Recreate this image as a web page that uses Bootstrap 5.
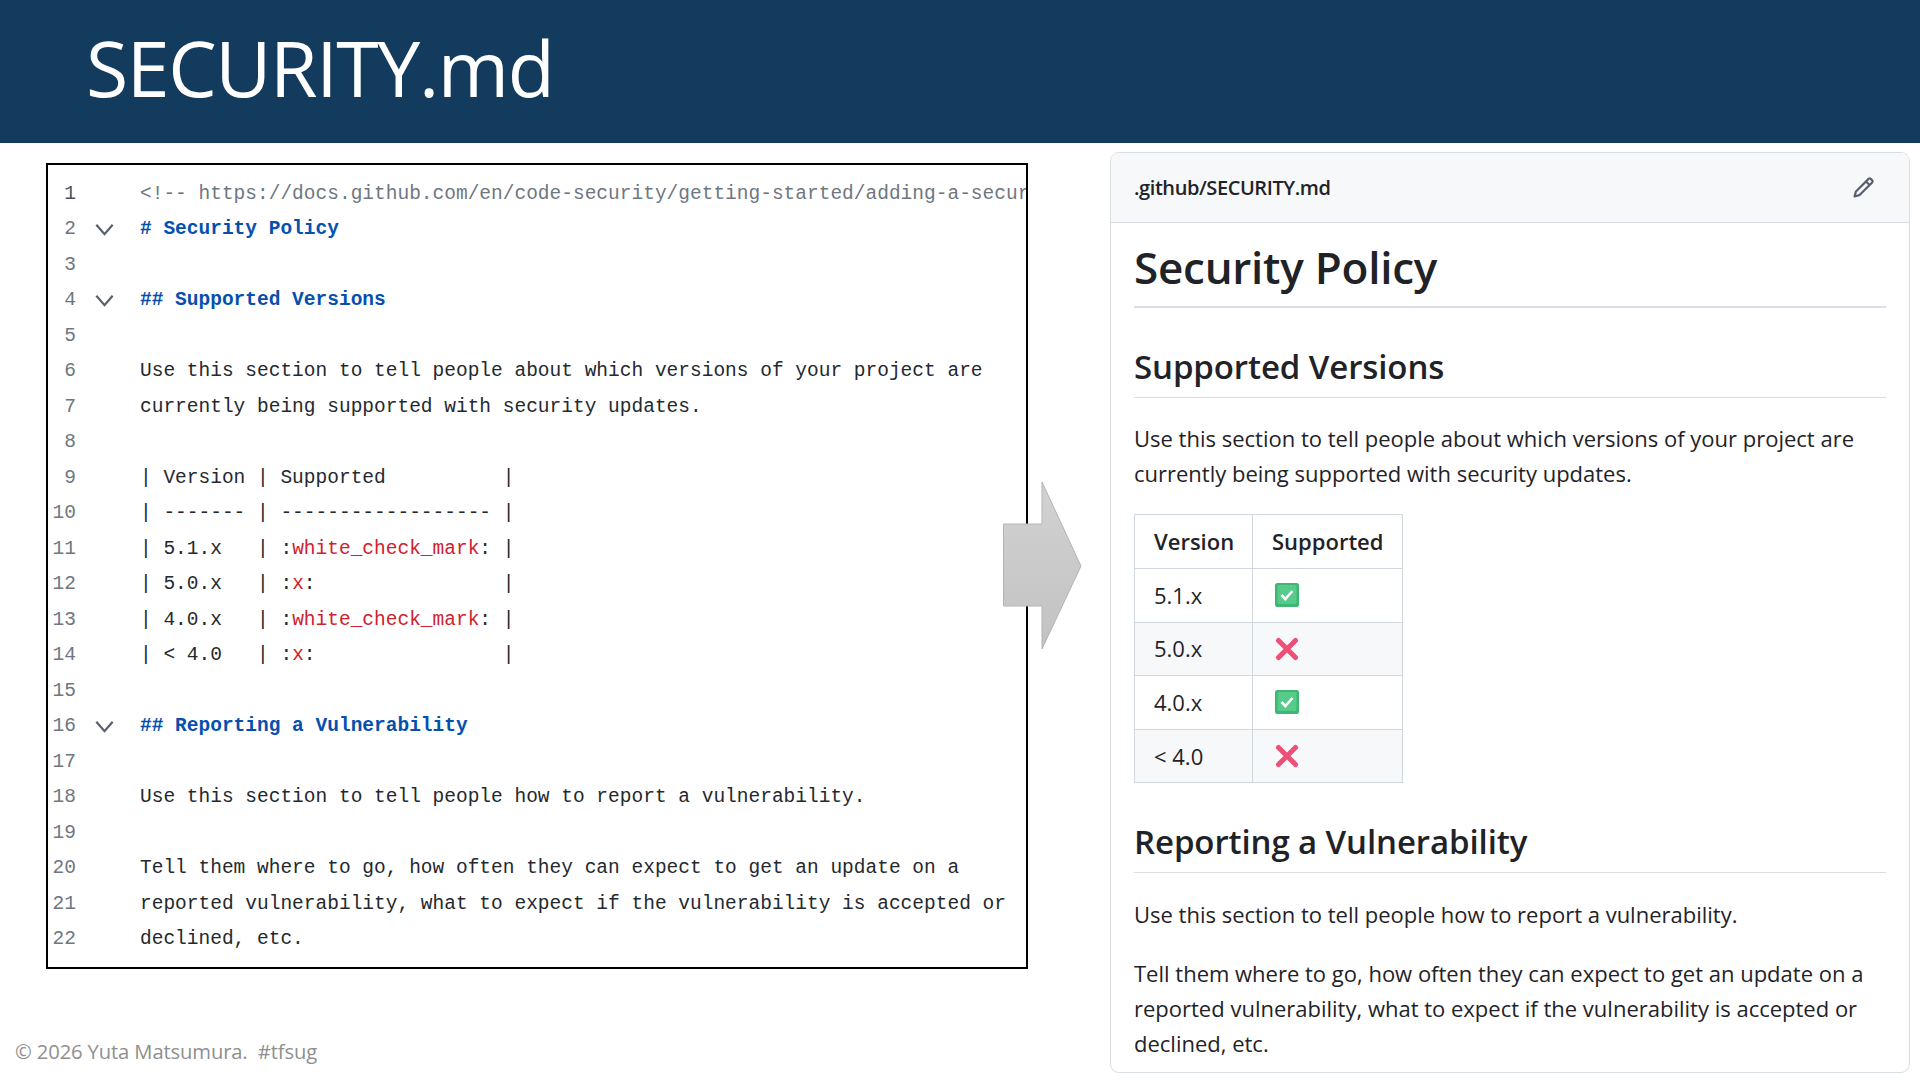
<!doctype html>
<html lang="en">
<head>
<meta charset="utf-8">
<title>SECURITY.md</title>
<link href="https://cdn.jsdelivr.net/npm/bootstrap@5.3.0/dist/css/bootstrap.min.css" rel="stylesheet">
<style>
html,body{margin:0;background:#fff;}
.slide-frame{width:1920px;height:1080px;overflow:hidden;position:relative;background:#fff;font-family:"Open Sans",sans-serif;}
.slide-head{height:143px;background:#133b5d;color:#fff;padding-left:86px;}
.slide-title{font-family:"Open Sans",sans-serif;font-size:77px;line-height:135px;font-weight:400;margin:0;letter-spacing:-1.4px;}
.slide-main{height:937px;}
.left-col{width:1110px;padding:20px 0 14px 46px;}
.code-box{width:982px;height:806px;border:2px solid #000;padding-top:11.5px;overflow:hidden;font-family:"Liberation Mono",monospace;font-size:19.5px;color:#24292f;}
.code-row{height:35.5px;line-height:35.5px;white-space:pre;}
.ln{width:28px;text-align:right;color:#6e7781;flex:none;}
.ln-on{color:#4a525a;}
.fold{width:64px;flex:none;padding-left:18px;}
.fold svg{width:21px;height:21px;display:block;}
.c-comment{color:#6e7781;}
.c-head{color:#0550ae;font-weight:700;}
.c-red{color:#cf222e;}
.foot-note{margin-top:auto;margin-left:-31px;font-size:20.2px;line-height:30px;color:#8f8f8f;letter-spacing:-.12px;}
.md-card{width:800px;height:921px;margin-top:9px;border:1.5px solid #d8dee4;border-radius:9px;overflow:hidden;font-size:22px;color:#1f2328;}
.md-top{height:70px;background:#f6f8fa;border-bottom:1.5px solid #d8dee4;padding:0 34px 0 23px;}
.md-path{font-size:20px;font-weight:600;letter-spacing:-.42px;padding-top:1px;}
.md-pencil{width:23px;height:23px;fill:#57606a;}
.md-body{padding:15px 23px 0 23px;}
.md-h1{font-size:44px;line-height:58px;font-weight:600;margin:0;padding-bottom:10px;border-bottom:2px solid #d8dee4;letter-spacing:-.25px;}
.md-h2{font-size:33px;line-height:44px;font-weight:600;margin:37px 0 0;padding-bottom:8px;border-bottom:1.5px solid #d8dee4;letter-spacing:-.1px;}
.md-h2b{margin-top:37px;}
.md-p{font-size:22px;line-height:35.1px;margin:24px 0 0;}
.md-h2 + .md-p{margin-top:23.2px;}
.md-table{width:269px;margin:23px 0 0;border-collapse:collapse;font-size:22px;color:#1f2328;}
.md-table th,.md-table td{border:1.5px solid #d0d7de;height:53.6px;padding:0 0 0 19px;vertical-align:middle;background:#fff;box-shadow:none;}
.md-table th{font-weight:600;}
.md-table th:first-child,.md-table td:first-child{width:118px;}
.md-table tr.alt td{background:#f6f8fa;}
.md-emoji{width:24px;height:24px;display:block;margin-left:3px;}
.arrow-over{position:absolute;left:1000px;top:480px;width:84px;height:172px;}
</style>
</head>
<body>
<div class="slide-frame">
  <header class="slide-head d-flex align-items-start">
    <h1 class="slide-title">SECURITY.md</h1>
  </header>
  <div class="slide-main d-flex">
    <div class="left-col d-flex flex-column flex-shrink-0">
      <div class="code-box">
        <div class="code-row d-flex"><span class="ln ln-on">1</span><span class="fold"></span><span class="c-comment">&lt;!-- https://docs.github.com/en/code-security/getting-started/adding-a-security-policy-to-your-repository --&gt;</span></div>
        <div class="code-row d-flex"><span class="ln">2</span><span class="fold d-flex align-items-center"><svg viewBox="0 0 18 18"><path d="M2 5l7 8 7-8" fill="none" stroke="#57606a" stroke-width="1.9"/></svg></span><span class="c-head"># Security Policy</span></div>
        <div class="code-row d-flex"><span class="ln">3</span></div>
        <div class="code-row d-flex"><span class="ln">4</span><span class="fold d-flex align-items-center"><svg viewBox="0 0 18 18"><path d="M2 5l7 8 7-8" fill="none" stroke="#57606a" stroke-width="1.9"/></svg></span><span class="c-head">## Supported Versions</span></div>
        <div class="code-row d-flex"><span class="ln">5</span></div>
        <div class="code-row d-flex"><span class="ln">6</span><span class="fold"></span><span>Use this section to tell people about which versions of your project are</span></div>
        <div class="code-row d-flex"><span class="ln">7</span><span class="fold"></span><span>currently being supported with security updates.</span></div>
        <div class="code-row d-flex"><span class="ln">8</span></div>
        <div class="code-row d-flex"><span class="ln">9</span><span class="fold"></span><span>| Version | Supported          |</span></div>
        <div class="code-row d-flex"><span class="ln">10</span><span class="fold"></span><span>| ------- | ------------------ |</span></div>
        <div class="code-row d-flex"><span class="ln">11</span><span class="fold"></span><span>| 5.1.x   | :<span class="c-red">white_check_mark</span>: |</span></div>
        <div class="code-row d-flex"><span class="ln">12</span><span class="fold"></span><span>| 5.0.x   | :<span class="c-red">x</span>:                |</span></div>
        <div class="code-row d-flex"><span class="ln">13</span><span class="fold"></span><span>| 4.0.x   | :<span class="c-red">white_check_mark</span>: |</span></div>
        <div class="code-row d-flex"><span class="ln">14</span><span class="fold"></span><span>| &lt; 4.0   | :<span class="c-red">x</span>:                |</span></div>
        <div class="code-row d-flex"><span class="ln">15</span></div>
        <div class="code-row d-flex"><span class="ln">16</span><span class="fold d-flex align-items-center"><svg viewBox="0 0 18 18"><path d="M2 5l7 8 7-8" fill="none" stroke="#57606a" stroke-width="1.9"/></svg></span><span class="c-head">## Reporting a Vulnerability</span></div>
        <div class="code-row d-flex"><span class="ln">17</span></div>
        <div class="code-row d-flex"><span class="ln">18</span><span class="fold"></span><span>Use this section to tell people how to report a vulnerability.</span></div>
        <div class="code-row d-flex"><span class="ln">19</span></div>
        <div class="code-row d-flex"><span class="ln">20</span><span class="fold"></span><span>Tell them where to go, how often they can expect to get an update on a</span></div>
        <div class="code-row d-flex"><span class="ln">21</span><span class="fold"></span><span>reported vulnerability, what to expect if the vulnerability is accepted or</span></div>
        <div class="code-row d-flex"><span class="ln">22</span><span class="fold"></span><span>declined, etc.</span></div>
      </div>
      <div class="foot-note">© 2026 Yuta Matsumura.&nbsp; #tfsug</div>
    </div>
    <section class="md-card flex-shrink-0">
      <div class="md-top d-flex align-items-center justify-content-between">
        <span class="md-path">.github/SECURITY.md</span>
        <svg class="md-pencil" viewBox="0 0 16 16"><path d="M11.013 1.427a1.75 1.75 0 0 1 2.474 0l1.086 1.086a1.75 1.75 0 0 1 0 2.474l-8.61 8.61c-.21.21-.47.364-.756.445l-3.251.93a.75.75 0 0 1-.927-.928l.929-3.25c.081-.286.235-.547.445-.758l8.61-8.61Zm.176 4.823L9.75 4.81l-6.286 6.287a.253.253 0 0 0-.064.108l-.558 1.953 1.953-.558a.253.253 0 0 0 .108-.064Zm1.238-3.763a.25.25 0 0 0-.354 0L10.811 3.75l1.439 1.44 1.263-1.263a.25.25 0 0 0 0-.354Z"/></svg>
      </div>
      <div class="md-body">
        <h2 class="md-h1">Security Policy</h2>
        <h3 class="md-h2">Supported Versions</h3>
        <p class="md-p">Use this section to tell people about which versions of your project are currently being supported with security updates.</p>
        <table class="md-table">
          <thead><tr><th>Version</th><th>Supported</th></tr></thead>
          <tbody>
            <tr><td>5.1.x</td><td><svg class="md-emoji" viewBox="0 0 24 24"><rect width="24" height="24" rx="2.5" fill="#3fb673"/><rect x="2.5" y="2" width="19" height="19" rx="1.5" fill="#57cb8a"/><path d="M6.5 12l3.8 4 7.2-8" fill="none" stroke="#fff" stroke-width="2.6"/></svg></td></tr>
            <tr class="alt"><td>5.0.x</td><td><svg class="md-emoji" viewBox="0 0 24 24"><path d="M3.5 3.5l17 17M20.500 3.500l-17 17" fill="none" stroke="#ee4f78" stroke-width="5" stroke-linecap="round"/></svg></td></tr>
            <tr><td>4.0.x</td><td><svg class="md-emoji" viewBox="0 0 24 24"><rect width="24" height="24" rx="2.5" fill="#3fb673"/><rect x="2.5" y="2" width="19" height="19" rx="1.5" fill="#57cb8a"/><path d="M6.5 12l3.8 4 7.2-8" fill="none" stroke="#fff" stroke-width="2.6"/></svg></td></tr>
            <tr class="alt"><td>&lt; 4.0</td><td><svg class="md-emoji" viewBox="0 0 24 24"><path d="M3.5 3.5l17 17M20.500 3.500l-17 17" fill="none" stroke="#ee4f78" stroke-width="5" stroke-linecap="round"/></svg></td></tr>
          </tbody>
        </table>
        <h3 class="md-h2 md-h2b">Reporting a Vulnerability</h3>
        <p class="md-p">Use this section to tell people how to report a vulnerability.</p>
        <p class="md-p">Tell them where to go, how often they can expect to get an update on a reported vulnerability, what to expect if the vulnerability is accepted or declined, etc.</p>
      </div>
    </section>
  </div>
  <svg class="arrow-over" viewBox="0 0 84 172"><defs><linearGradient id="arrowfill" x1="0" y1="0" x2="0" y2="1"><stop offset="0" stop-color="#d2d2d2"/><stop offset="1" stop-color="#c2c2c2"/></linearGradient></defs><path d="M3.500 44H42V2L81 86 42 169V126H3.500Z" fill="url(#arrowfill)" stroke="#b4b4b4" stroke-width="1"/></svg>
</div>
<script src="https://cdn.jsdelivr.net/npm/bootstrap@5.3.0/dist/js/bootstrap.bundle.min.js"></script>
</body>
</html>
